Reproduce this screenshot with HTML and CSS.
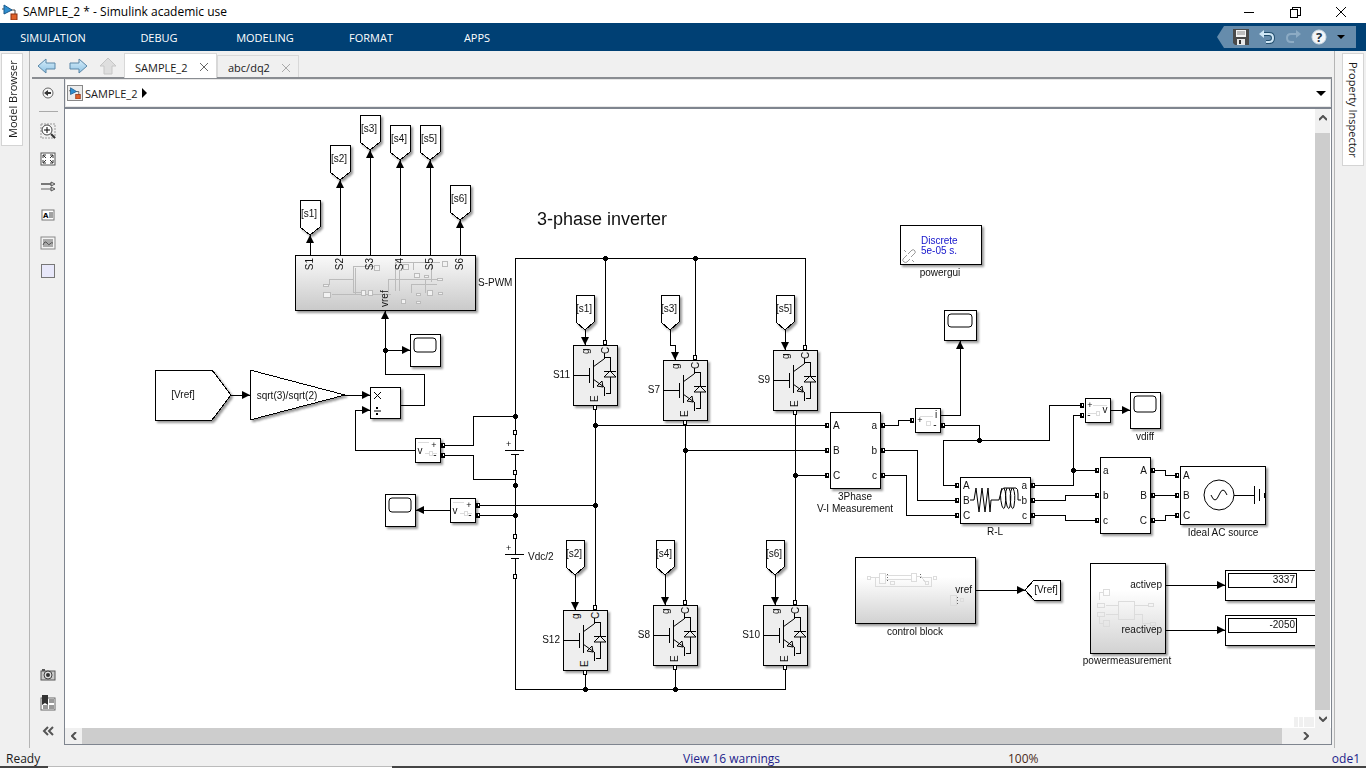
FILE: index.html
```html
<!DOCTYPE html>
<html lang="en">
<head>
  <meta charset="UTF-8">
  <title>SAMPLE_2 * - Simulink academic use</title>
  <link rel="stylesheet" href="styles.css">
</head>
<body>
  <header class="titlebar">
    <svg class="app-icon" width="16" height="16" viewBox="0 0 16 16">
      <path d="M0 5h3M9 6h4v4" fill="none" stroke="#444"/>
      <path d="M2 1l8 5-8 4z" fill="#2f8fd0" stroke="#1b5a8c"/>
      <rect x="9" y="10" width="6" height="6" fill="#e0622a" stroke="#8a2f10"/>
    </svg>
    <h1>SAMPLE_2 * - Simulink academic use</h1>
    <div class="window-buttons">
      <button type="button" aria-label="Minimize"><svg width="12" height="12"><path d="M1 6h10"/></svg></button>
      <button type="button" aria-label="Restore"><svg width="12" height="12"><path d="M1 3h7v8h-7zM3 3V1h8v8H8"/></svg></button>
      <button type="button" aria-label="Close"><svg width="12" height="12"><path class="smooth" d="M1 1l10 10M11 1L1 11"/></svg></button>
    </div>
  </header>

  <nav class="toolstrip">
    <button type="button">SIMULATION</button>
    <button type="button">DEBUG</button>
    <button type="button">MODELING</button>
    <button type="button">FORMAT</button>
    <button type="button">APPS</button>
    <div class="quick-access">
      <button type="button" aria-label="Save">
        <svg width="16" height="16" viewBox="0 0 16 16">
          <path d="M0 0h16v16H2L0 14z" fill="#4a4a4a"/>
          <rect x="3" y="1" width="10" height="7" fill="#f4f4f4"/>
          <path d="M4 3h8M4 5h8" stroke="#888"/>
          <rect x="4" y="10" width="8" height="6" fill="#e8e8e8"/>
          <rect x="6" y="11" width="2" height="4" fill="#333"/>
        </svg>
      </button>
      <button type="button" aria-label="Undo">
        <svg width="16" height="14" viewBox="0 0 16 14">
          <path d="M4 4h6q4 0 4 4t-4 4H7" fill="none" stroke="#24506f" stroke-width="4"/>
          <path d="M4 4h6q4 0 4 4t-4 4H7" fill="none" stroke="#cfe6f5" stroke-width="2"/>
          <path d="M0 4l5-4v8z" fill="#cfe6f5"/>
        </svg>
      </button>
      <button type="button" aria-label="Redo" disabled>
        <svg width="16" height="14" viewBox="0 0 16 14">
          <path d="M12 4H6Q2 4 2 8t4 4h3" fill="none" stroke="#8cabc4" stroke-width="2"/>
          <path d="M16 4l-5-4v8z" fill="#8cabc4"/>
        </svg>
      </button>
      <button type="button" aria-label="Help">
        <svg width="16" height="16" viewBox="0 0 16 16">
          <circle cx="8" cy="8" r="7" fill="#f2f5f8" stroke="#cdd9e3"/>
          <text x="8" y="13" text-anchor="middle" class="help-mark">?</text>
        </svg>
      </button>
      <button type="button" class="more" aria-label="More"><svg width="8" height="4"><path d="M0 0h8L4 4z"/></svg></button>
    </div>
  </nav>

  <main class="workspace">
    <aside class="dock dock-left">
      <button type="button" class="dock-tab">Model Browser</button>
    </aside>

    <section class="editor">
      <div class="tab-row">
        <div class="history">
          <button type="button" aria-label="Back">
            <svg width="20" height="16" viewBox="0 0 20 16"><path d="M1 8l8-7v4h9v6H9v4z" fill="url(#blue)" stroke="#5a87a8"/></svg>
          </button>
          <button type="button" aria-label="Forward">
            <svg width="20" height="16" viewBox="0 0 20 16"><path d="M19 8l-8-7v4H2v6h9v4z" fill="url(#blue)" stroke="#5a87a8"/></svg>
          </button>
          <button type="button" aria-label="Up to parent" disabled>
            <svg width="18" height="18" viewBox="0 0 18 18"><path d="M9 1l8 8h-4v8H5V9H1z" fill="#dedede" stroke="#c6c6c6"/></svg>
          </button>
        </div>
        <div class="tab active">
          <span>SAMPLE_2</span>
          <button type="button" aria-label="Close SAMPLE_2"><svg width="8" height="8"><path d="M0 0l8 8M8 0L0 8"/></svg></button>
        </div>
        <div class="tab">
          <span>abc/dq2</span>
          <button type="button" aria-label="Close abc/dq2"><svg width="8" height="8"><path d="M0 0l8 8M8 0L0 8"/></svg></button>
        </div>
      </div>

      <div class="editor-body">
        <div class="palette">
          <button type="button" aria-label="Hide browser">
            <svg width="12" height="12" viewBox="0 0 12 12"><circle cx="6" cy="6" r="5" fill="#f8f8f8" stroke="#666"/><path d="M2 6l4-3v2h3v2H6v2z" fill="#333"/></svg>
          </button>
          <hr>
          <button type="button" aria-label="Zoom">
            <svg width="16" height="16" viewBox="0 0 16 16">
              <rect x="1" y="1" width="14" height="14" fill="none" stroke="#999" stroke-dasharray="2 1"/>
              <circle cx="7" cy="7" r="5" fill="#fff" stroke="#444"/>
              <path d="M4 7h6M7 4v6" stroke="#000"/>
              <path d="M11 11l4 4" stroke="#333" stroke-width="2"/>
            </svg>
          </button>
          <button type="button" aria-label="Fit to view">
            <svg width="16" height="14" viewBox="0 0 16 14">
              <rect x="1" y="1" width="14" height="12" fill="#fff" stroke="#555"/>
              <path d="M3 6V3h3M10 3h3v3M13 8v3h-3M6 11H3V8M3 3l3 3M13 3l-3 3M13 11l-3-3M3 11l3-3" fill="none" stroke="#333"/>
            </svg>
          </button>
          <button type="button" aria-label="Sample time">
            <svg width="16" height="12" viewBox="0 0 16 12">
              <path d="M1 3h11" stroke="#000"/><path d="M1 8h11" stroke="#666"/>
              <path d="M11 1l4 2-4 2zM11 6l4 2-4 2z" fill="#ddd" stroke="#555"/>
            </svg>
          </button>
          <button type="button" aria-label="Annotation">
            <svg width="14" height="12" viewBox="0 0 14 12">
              <rect x="1" y="1" width="12" height="10" fill="#fff" stroke="#777"/>
              <text x="2" y="9" class="note-mark">A</text>
              <path d="M8 4h4M8 6h4M8 8h4" stroke="#444"/>
            </svg>
          </button>
          <button type="button" aria-label="Image">
            <svg width="16" height="14" viewBox="0 0 16 14">
              <rect x="1" y="1" width="14" height="12" fill="#f4f4f4" stroke="#888"/>
              <rect x="3" y="3" width="10" height="8" fill="#aaa"/>
              <path d="M3 9q2-5 4-2t3 1 3-1" fill="none" stroke="#555"/>
            </svg>
          </button>
          <button type="button" aria-label="Area">
            <svg width="14" height="14" viewBox="0 0 14 14"><path d="M0 0h14v14H0z" fill="#777"/><path d="M1 1h12v12H1z" fill="#e8e8fa"/></svg>
          </button>
          <div class="spacer"></div>
          <button type="button" aria-label="Screenshot">
            <svg width="16" height="12" viewBox="0 0 16 12">
              <path d="M2 0h3v2H2z" fill="#555"/>
              <rect x="1" y="2" width="14" height="9" fill="#c9c9c9" stroke="#555"/>
              <circle cx="8" cy="6" r="4" fill="#ddd" stroke="#444"/><circle cx="8" cy="6" r="2" fill="#333"/>
            </svg>
          </button>
          <button type="button" aria-label="Viewmarks">
            <svg width="16" height="16" viewBox="0 0 16 16">
              <rect x="1" y="3" width="14" height="12" fill="#fff" stroke="#666"/>
              <path d="M9 4h5v4H9zM9 10h5v4H9zM3 10h5v4H3z" fill="#999"/>
              <path d="M2 0h6v10L5 8l-3 2z" fill="#333"/>
            </svg>
          </button>
          <button type="button" aria-label="Collapse palette">
            <svg width="12" height="10" viewBox="0 0 12 10"><path d="M6 1L2 5l4 4M11 1L7 5l4 4" fill="none" stroke="#555" stroke-width="2"/></svg>
          </button>
        </div>

        <div class="panel">
          <div class="breadcrumb">
            <span class="crumb-icon">
              <svg width="12" height="12" viewBox="0 0 16 16">
                <path d="M0 5h3M9 6h4v4" fill="none" stroke="#444"/>
                <path d="M2 1l8 5-8 4z" fill="#2f8fd0" stroke="#1b5a8c"/>
                <rect x="9" y="10" width="6" height="6" fill="#e0622a" stroke="#8a2f10"/>
              </svg>
            </span>
            <a href="#">SAMPLE_2</a>
            <svg width="5" height="10"><path d="M0 0l5 5-5 5z"/></svg>
            <button type="button" aria-label="Show path history"><svg width="10" height="5"><path d="M0 0h10L5 5z"/></svg></button>
          </div>

          <div class="canvas">
            <svg class="diagram" width="100%" height="100%">
              <defs>
                <linearGradient id="blue" x1="0" y1="0" x2="0" y2="1">
                  <stop offset="0" stop-color="#d8eefa"/><stop offset="1" stop-color="#8fc3e4"/>
                </linearGradient>
                <linearGradient id="shade" x1="0" y1="0" x2="0" y2="1">
                  <stop offset="0.3" stop-color="#fff"/><stop offset="1" stop-color="#d2d2d2"/>
                </linearGradient>
                <linearGradient id="shade-dark" x1="0" y1="0" x2="0" y2="1">
                  <stop offset="0" stop-color="#fafafa"/><stop offset="1" stop-color="#cacaca"/>
                </linearGradient>
                <marker id="arrow" viewBox="0 0 8 8" refX="8" refY="4" markerWidth="8" markerHeight="8" markerUnits="userSpaceOnUse" orient="auto">
                  <path d="M0 0l8 4-8 4z"/>
                </marker>
                <g id="port-h"><path class="solid" d="M-2-2h4v5h-4z"/><path class="hole" d="M0-1h1v2h-1z"/></g>
                <g id="port-v"><path class="solid" d="M-2-2h4v5h-4z"/><path class="hole" d="M-1-1h2v3h-2z"/></g>
                <g id="dot"><path class="solid" d="M-1-2h3v1h1v3h-1v1h-3v-1h-1v-3h1z"/></g>
                <path id="tag" d="M0 0h20v27l-10 8-10-8z"/>
                <path id="tag-small" d="M0 0h18v27l-9 8-9-8z"/>
                <g id="scope">
                  <rect width="30" height="32"/>
                  <rect class="screen" x="4" y="4" width="22" height="14" rx="3"/>
                </g>
                <g id="igbt">
                  <rect class="block grey" width="44" height="60"/>
                  <g class="wire">
                    <path d="M0 30h16M16 23v15M20 15v28M31 12h6v14M31 26h12M37 32v16h-4M31 8v6M31 42v9"/>
                    <path class="smooth" d="M20 22l11-8M20 34l11 8M31 32l6-6 6 6zM24 41l5-5 1 6z"/>
                  </g>
                  <text transform="translate(16 9) rotate(-90)">g</text>
                  <text transform="translate(36 9) rotate(-90)">C</text>
                  <text transform="translate(25 57) rotate(-90)">E</text>
                  <use href="#port-v" x="32" y="-3"/>
                  <use href="#port-v" x="22" y="62"/>
                </g>
                <g id="cell">
                  <path class="wire" d="M-10 0h19M-4 4h8"/>
                  <text x="-9" y="-3" class="tiny">+</text>
                  <use href="#port-v" x="0" y="-18"/>
                  <use href="#port-v" x="0" y="22"/>
                </g>
              </defs>

              <!-- model coordinates start at 65,109 in the upper left corner -->
              <g transform="translate(-65 -109)">
                <!-- DC bus and inverter legs -->
                <g class="wire">
                  <path d="M515 450V258H805V347M605 258V341M695 258V357"/>
                  <path d="M515 454V554M515 558V689H785V669M585 674V689M675 669V689"/>
                  <path d="M595 409V607M595 425H827M685 424V602M685 450H827M795 414V602M795 475H827"/>
                  <path d="M445 445H473V416H515M445 455H473V479H515M480 505H595M480 515H515"/>
                </g>

                <!-- load side -->
                <g class="wire">
                  <path d="M885 425H898V420H911M945 425H979V440M957 485H943V440H1049V405H1083"/>
                  <path d="M885 450H917V500H957M885 475H906V515H957"/>
                  <path d="M1035 485H1073V415H1083M1073 470H1097M1035 500H1065V495H1097M1035 515H1065V520H1097"/>
                  <path d="M1154 470H1165V475H1177M1154 495H1177M1154 520H1165V515H1177"/>
                </g>

                <!-- signals -->
                <g class="wire" marker-end="url(#arrow)">
                  <path d="M310 255V235"/><path d="M340 255V180"/><path d="M370 255V150"/>
                  <path d="M400 255V160"/><path d="M430 255V160"/><path d="M460 255V220"/>
                  <path d="M401 405H424V374H385V311"/><path d="M385 350H410"/>
                  <path d="M231 395H250"/><path d="M345 395H370"/><path d="M415 450H355V410H370"/>
                  <path d="M450 510H416"/>
                  <path d="M585 330V345"/><path d="M670 330V345H675V360"/><path d="M785 330V350"/>
                  <path d="M575 575V610"/><path d="M665 575V605"/><path d="M775 575V605"/>
                  <path d="M941 415H960V341"/><path d="M1111 410H1130"/>
                  <path d="M976 590H1025"/><path d="M1166 585H1225"/><path d="M1166 630H1225"/>
                </g>

                <!-- goto tags -->
                <g class="block">
                  <use href="#tag" x="300" y="200"/><use href="#tag" x="330" y="145"/>
                  <use href="#tag" x="360" y="115"/><use href="#tag" x="390" y="125"/>
                  <use href="#tag" x="420" y="125"/><use href="#tag" x="450" y="185"/>
                  <use href="#tag-small" x="576" y="295"/><use href="#tag-small" x="661" y="295"/>
                  <use href="#tag-small" x="776" y="295"/><use href="#tag-small" x="566" y="540"/>
                  <use href="#tag-small" x="656" y="540"/><use href="#tag-small" x="766" y="540"/>
                  <path d="M155 370h57l19 25-19 25h-57z"/>
                  <path d="M250 370l95 25-95 25z"/>
                  <path d="M1025 590l9-10h26v20h-26z"/>
                </g>
                <g class="mid">
                  <text x="309" y="217">[s1]</text><text x="339" y="162">[s2]</text>
                  <text x="369" y="132">[s3]</text><text x="399" y="142">[s4]</text>
                  <text x="429" y="142">[s5]</text><text x="459" y="202">[s6]</text>
                  <text x="584" y="312">[s1]</text><text x="669" y="312">[s3]</text>
                  <text x="784" y="312">[s5]</text><text x="574" y="557">[s2]</text>
                  <text x="664" y="557">[s4]</text><text x="774" y="557">[s6]</text>
                  <text x="183" y="398">[Vref]</text><text x="287" y="399">sqrt(3)/sqrt(2)</text>
                  <text x="1046" y="593">[Vref]</text>
                </g>

                <!-- S-PWM subsystem -->
                <rect class="block dark" x="295" y="255" width="180" height="55"/>
                <g class="preview">
                  <path d="M329 285V279H353V266H374M353 279V292H361M332 294H391M355 294V268M388 293V279H440M395 291V262H440M399 291V270H402M425 293V279M431 262V282M411 293V284H437M413 270V262"/>
                  <path d="M323 284h5v2h-5zM323 292h7v5h-7zM374 265h5v5h-5zM361 290h4v5h-4zM368 290h4v5h-4zM403 264h5v5h-5zM414 273h5v4h-5zM442 261h5v5h-5zM427 290h5v5h-5zM401 299h4v4h-4zM416 293h4v2h-4zM438 292h4v2h-4zM416 301h4v2h-4zM437 278h5v2h-5zM424 275h4v2h-4z"/>
                </g>
                <g class="end">
                  <text transform="translate(313 258) rotate(-90)">S1</text>
                  <text transform="translate(343 258) rotate(-90)">S2</text>
                  <text transform="translate(373 258) rotate(-90)">S3</text>
                  <text transform="translate(403 258) rotate(-90)">S4</text>
                  <text transform="translate(433 258) rotate(-90)">S5</text>
                  <text transform="translate(463 258) rotate(-90)">S6</text>
                </g>
                <text transform="translate(388 307) rotate(-90)">vref</text>
                <text x="478" y="286">S-PWM</text>

                <!-- product -->
                <rect class="block" x="370" y="387" width="30" height="31"/>
                <path class="symbol" d="M374 392l7 7M381 392l-7 7M374 411h7"/>
                <path class="solid" d="M376 407h2v2h-2zM376 413h2v2h-2z"/>

                <!-- scopes -->
                <g class="block">
                  <use href="#scope" x="410" y="334"/>
                  <use href="#scope" x="385" y="494"/>
                  <rect x="944" y="310" width="32" height="30"/>
                  <rect class="screen" x="948" y="314" width="24" height="13" rx="3"/>
                  <rect x="1130" y="392" width="30" height="36"/>
                  <rect class="screen" x="1134" y="396" width="22" height="16" rx="3"/>
                </g>

                <!-- voltage and current measurement -->
                <g class="block">
                  <rect x="415" y="438" width="25" height="24"/>
                  <rect x="450" y="498" width="25" height="24"/>
                  <rect x="915" y="408" width="25" height="24"/>
                  <rect x="1085" y="398" width="25" height="24"/>
                </g>
                <g class="preview faint">
                  <path d="M418 442H429M425 453h4M433 453h4M453 502H464M460 513h4M468 513h4M920 416H933M1093 405H1107M1088 413H1096"/>
                  <path d="M429 451h3v4h-3zM464 511h3v4h-3zM926 421h4v4h-4zM1096 411h3v4h-3z"/>
                </g>
                <g class="mid">
                  <text x="420" y="454">v</text><text x="434" y="448" class="tiny">+</text><text x="435" y="458">-</text>
                  <text x="455" y="514">v</text><text x="469" y="508" class="tiny">+</text><text x="470" y="518">-</text>
                  <text x="920" y="423" class="tiny">+</text><text x="936" y="418">i</text><text x="935" y="428">-</text>
                  <text x="1090" y="408" class="tiny">+</text><text x="1089" y="418">-</text><text x="1105" y="413">v</text>
                </g>

                <!-- switches -->
                <use href="#igbt" x="573" y="345"/><use href="#igbt" x="663" y="360"/>
                <use href="#igbt" x="773" y="350"/><use href="#igbt" x="563" y="610"/>
                <use href="#igbt" x="653" y="605"/><use href="#igbt" x="763" y="605"/>
                <g class="end">
                  <text x="570" y="378">S11</text><text x="660" y="393">S7</text><text x="770" y="383">S9</text>
                  <text x="560" y="643">S12</text><text x="650" y="638">S8</text><text x="760" y="638">S10</text>
                </g>

                <!-- DC sources -->
                <use href="#cell" x="515" y="450"/><use href="#cell" x="515" y="554"/>
                <text x="528" y="560">Vdc/2</text>

                <!-- three phase blocks -->
                <g class="block">
                  <rect x="830" y="412" width="50" height="76"/>
                  <rect x="960" y="477" width="70" height="46"/>
                  <rect x="1100" y="457" width="50" height="76"/>
                  <rect x="1180" y="466" width="85" height="58"/>
                </g>
                <text x="833" y="429">A</text><text x="833" y="454">B</text><text x="833" y="479">C</text>
                <text x="963" y="489">A</text><text x="963" y="504">B</text><text x="963" y="519">C</text>
                <text x="1103" y="474">a</text><text x="1103" y="499">b</text><text x="1103" y="524">c</text>
                <text x="1183" y="479">A</text><text x="1183" y="499">B</text><text x="1183" y="519">C</text>
                <g class="end">
                  <text x="877" y="429">a</text><text x="877" y="454">b</text><text x="877" y="479">c</text>
                  <text x="1027" y="489">a</text><text x="1027" y="504">b</text><text x="1027" y="519">c</text>
                  <text x="1147" y="474">A</text><text x="1147" y="499">B</text><text x="1147" y="524">C</text>
                </g>
                <path class="symbol" d="M970 500h4l2-12 3 24 3-24 3 24 3-24 2 24 1-12h8l2-8q1-4 3-4h12q2 0 2 6v6h3M1002 488q-3 6 0 18 2 5 3 0 2-12-1-18M1007 488q-3 6 0 18 2 5 3 0 2-12-1-18M1012 488q-3 6-1 18 2 5 3 0 2-12-1-18"/>
                <circle class="symbol" cx="1219" cy="495" r="15"/>
                <path class="symbol" d="M1211 495q4 10 8 0t8 0"/>
                <path class="wire" d="M1234 495H1254M1254 486V504M1259 489V501M1264 493V498"/>

                <!-- physical ports -->
                <use href="#port-h" x="443" y="445"/><use href="#port-h" x="443" y="455"/>
                <use href="#port-h" x="478" y="505"/><use href="#port-h" x="478" y="515"/>
                <use href="#port-h" x="827" y="425"/><use href="#port-h" x="827" y="450"/><use href="#port-h" x="827" y="475"/>
                <use href="#port-h" x="883" y="425"/><use href="#port-h" x="883" y="450"/><use href="#port-h" x="883" y="475"/>
                <use href="#port-h" x="912" y="420"/><use href="#port-h" x="943" y="425"/>
                <use href="#port-h" x="957" y="485"/><use href="#port-h" x="957" y="500"/><use href="#port-h" x="957" y="515"/>
                <use href="#port-h" x="1033" y="485"/><use href="#port-h" x="1033" y="500"/><use href="#port-h" x="1033" y="515"/>
                <use href="#port-h" x="1082" y="405"/><use href="#port-h" x="1082" y="415"/>
                <use href="#port-h" x="1097" y="470"/><use href="#port-h" x="1097" y="495"/><use href="#port-h" x="1097" y="520"/>
                <use href="#port-h" x="1153" y="470"/><use href="#port-h" x="1153" y="495"/><use href="#port-h" x="1153" y="520"/>
                <use href="#port-h" x="1177" y="475"/><use href="#port-h" x="1177" y="495"/><use href="#port-h" x="1177" y="515"/>

                <!-- junctions -->
                <use href="#dot" x="605" y="258"/><use href="#dot" x="695" y="258"/>
                <use href="#dot" x="385" y="350"/><use href="#dot" x="515" y="416"/>
                <use href="#dot" x="515" y="485"/><use href="#dot" x="515" y="515"/>
                <use href="#dot" x="595" y="425"/><use href="#dot" x="595" y="505"/>
                <use href="#dot" x="685" y="450"/><use href="#dot" x="795" y="475"/>
                <use href="#dot" x="585" y="689"/><use href="#dot" x="675" y="689"/>
                <use href="#dot" x="979" y="440"/><use href="#dot" x="1073" y="470"/>

                <!-- powergui -->
                <rect class="block" x="900" y="225" width="81" height="39"/>
                <text x="921" y="244" class="blue">Discrete</text>
                <text x="921" y="254" class="blue">5e-05 s.</text>
                <path class="link-icon" d="M908 254l4-4q2-1 3 1t-1 3l-3 3M907 255l-4 4q-1 2 1 3t3 0l3-3M904 250l2 2M912 260l2 2"/>

                <!-- control block and power measurement -->
                <rect class="block shaded" x="855" y="557" width="120" height="66"/>
                <rect class="block shaded" x="1090" y="563" width="75" height="90"/>
                <g class="preview faint">
                  <path d="M870 577h9M875 577v9h56v-8M885 575h26M885 579h26M916 576h5l4 6M922 577h10"/>
                  <path d="M867 576h3v3h-3zM879 573h6v10h-6zM911 573h5v8h-5zM890 581h4v3h-4zM933 576h3v3h-3zM950 595h6v10h-6zM960 598h3v3h-3zM925 581h3v3h-3z"/>
                  <path d="M1099 600V592H1103M1106 605H1118M1106 614H1118M1099 617V623H1103M1134 605H1148M1134 614H1142V623H1150"/>
                  <path d="M1103 589h6v6h-6zM1097 603h7v4h-7zM1097 612h7v4h-7zM1103 620h6v6h-6zM1118 601h16v18h-16zM1148 603h5v3h-5zM1150 622h5v3h-5z"/>
                  <path class="specks" d="M887 574v9M920 574v5M957 597v7"/>
                </g>
                <g class="end">
                  <text x="972" y="593">vref</text>
                  <text x="1162" y="588">activep</text>
                  <text x="1162" y="633">reactivep</text>
                </g>

                <!-- displays, cut off by the view -->
                <rect class="block" x="1225" y="570" width="120" height="30"/>
                <rect class="block" x="1225" y="615" width="120" height="30"/>
                <path class="wire" d="M1228 573h68v14h-68zM1228 618h68v14h-68z"/>
                <g class="end">
                  <text x="1295" y="583">3337</text>
                  <text x="1295" y="628">-2050</text>
                </g>

                <!-- captions -->
                <g class="mid">
                  <text x="602" y="225" class="heading">3-phase inverter</text>
                  <text x="940" y="276">powergui</text>
                  <text x="855" y="500">3Phase</text>
                  <text x="855" y="512">V-I Measurement</text>
                  <text x="995" y="535">R-L</text>
                  <text x="1145" y="440">vdiff</text>
                  <text x="1223" y="536">Ideal AC source</text>
                  <text x="915" y="635">control block</text>
                  <text x="1127" y="664">powermeasurement</text>
                </g>
              </g>
            </svg>
            <div class="resize-hint"><i></i><i></i><i></i></div>
            <div class="scroll-y">
              <button type="button" aria-label="Scroll up"><svg width="8" height="6"><path d="M0 5l4-4 4 4"/></svg></button>
              <div class="thumb"></div>
              <button type="button" aria-label="Scroll down"><svg width="8" height="6"><path d="M0 1l4 4 4-4"/></svg></button>
            </div>
            <div class="scroll-x">
              <button type="button" aria-label="Scroll left"><svg width="6" height="8"><path d="M5 0L1 4l4 4"/></svg></button>
              <div class="thumb"></div>
              <button type="button" aria-label="Scroll right"><svg width="6" height="8"><path d="M1 0l4 4-4 4"/></svg></button>
            </div>
          </div>
        </div>
      </div>
    </section>

    <aside class="dock dock-right">
      <button type="button" class="dock-tab">Property Inspector</button>
    </aside>
  </main>

  <footer class="status">
    <span>Ready</span>
    <a href="#">View 16 warnings</a>
    <span class="zoom">100%</span>
    <a href="#" class="solver">ode1</a>
  </footer>
  <div class="screen-edge"><i></i></div>
</body>
</html>
```
FILE: styles.css
```css
* {
  box-sizing: border-box;
}
body {
  margin: 0;
  height: 100vh;
  display: flex;
  flex-direction: column;
  overflow: hidden;
  background: #f0f0f0;
  color: #1a1a1a;
  font-family: "Open Sans", "Noto Sans", sans-serif;
  font-size: 11px;
}
button {
  display: flex;
  align-items: center;
  justify-content: center;
  margin: 0;
  padding: 0;
  border: 0;
  background: none;
  color: inherit;
  font: inherit;
}
a {
  color: inherit;
  text-decoration: none;
}
svg {
  display: block;
}

/* Title bar */
.titlebar {
  flex: none;
  height: 23px;
  display: flex;
  align-items: center;
  padding-left: 2px;
  background: #fff;
}
.titlebar h1 {
  margin: 0 0 0 5px;
  font-size: 12px;
  font-weight: 400;
  color: #000;
}
.window-buttons {
  display: flex;
  margin-left: auto;
  padding-right: 2px;
}
.window-buttons button {
  width: 46px;
  height: 20px;
}
.window-buttons path {
  fill: none;
  stroke: #000;
  shape-rendering: crispEdges;
}

/* Toolstrip */
.toolstrip {
  flex: none;
  height: 28px;
  display: flex;
  align-items: center;
  background: #004074;
  color: #fff;
}
.toolstrip > button {
  width: 106px;
  height: 28px;
}
.quick-access {
  display: flex;
  align-items: center;
  gap: 10px;
  height: 22px;
  margin-left: auto;
  margin-right: 10px;
  padding: 0 11px 0 16px;
  background: #668cac;
  clip-path: polygon(7px 0, 100% 0, 100% 100%, 7px 100%, 0 50%);
}
.help-mark {
  font-size: 13px;
  font-weight: 700;
  fill: #234;
}

/* Side docks */
.workspace {
  flex: 1;
  min-height: 0;
  display: flex;
}
.dock {
  flex: none;
  padding-top: 2px;
}
.dock-left {
  width: 30px;
  padding-left: 1px;
  border-right: 1px solid #b5b5b5;
}
.dock-right {
  width: 32px;
  padding-left: 7px;
  border-left: 1px solid #b5b5b5;
}
.dock-tab {
  width: 22px;
  height: 93px;
  border: 1px solid #d4d4d4;
  background: #fff;
  writing-mode: vertical-rl;
}
.dock-left .dock-tab {
  transform: rotate(180deg);
}
.dock-right .dock-tab {
  height: 113px;
}

/* Editor tabs */
.editor {
  flex: 1;
  min-width: 0;
  display: flex;
  flex-direction: column;
  margin: 0 2px 3px;
}
.tab-row {
  flex: none;
  display: flex;
  align-items: flex-end;
  height: 28px;
  border-bottom: 2px solid #8a8d92;
}
.history {
  display: flex;
  align-items: center;
  gap: 11px;
  height: 26px;
  padding: 4px 7px 0 5px;
}
.tab {
  display: flex;
  align-items: center;
  justify-content: space-between;
  width: 82px;
  height: 22px;
  padding: 2px 7px 0 10px;
  border: 1px solid #d8d8d8;
  border-bottom: 0;
}
.tab button {
  width: 10px;
  height: 10px;
}
.tab path {
  fill: none;
  stroke: #aaa;
}
.tab.active {
  width: 93px;
  height: 25px;
  margin-bottom: -1px;
  background: #fff;
}
.tab.active path {
  stroke: #666;
}

/* Palette */
.editor-body {
  flex: 1;
  min-height: 0;
  display: flex;
}
.palette {
  flex: none;
  width: 32px;
  display: flex;
  flex-direction: column;
}
.palette button {
  width: 32px;
  height: 28px;
}
.palette hr {
  width: 19px;
  margin: 4px auto 5px;
  border: 0;
  border-top: 1px solid #aaa;
}
.spacer {
  flex: 1;
}
.note-mark {
  font: 700 7px "DejaVu Sans", sans-serif;
}

/* Breadcrumb */
.panel {
  flex: 1;
  min-width: 0;
  display: flex;
  flex-direction: column;
  border: 1px solid #7f858f;
  border-top: 0;
}
.breadcrumb {
  flex: none;
  display: flex;
  align-items: center;
  height: 30px;
  padding: 0 5px 0 2px;
  border-bottom: 2px solid #7f858f;
  background: #fff;
  box-shadow: inset 0 0 0 1px #e8e8e8;
}
.crumb-icon {
  display: flex;
  align-items: center;
  justify-content: center;
  width: 16px;
  height: 16px;
  margin-right: 2px;
  border: 1px solid #888;
  background: #ececec;
}
.breadcrumb a {
  margin-right: 5px;
}
.breadcrumb button {
  margin-left: auto;
}

/* Canvas and scrollbars */
.canvas {
  flex: 1;
  min-height: 0;
  position: relative;
  display: grid;
  grid-template-columns: 1fr 16px;
  grid-template-rows: 1fr 16px;
  background: #fff;
}
.diagram {
  min-width: 0;
  min-height: 0;
  overflow: hidden;
}
.resize-hint {
  position: absolute;
  right: 17px;
  bottom: 17px;
  display: flex;
  gap: 1px;
}
.resize-hint i {
  width: 4px;
  height: 10px;
  background: #f0f0f0;
}
.resize-hint i:last-child {
  width: 10px;
}
.scroll-y,
.scroll-x {
  display: flex;
  background: #f0f0f0;
}
.scroll-y {
  flex-direction: column;
  border-right: 1px solid #fff;
}
.scroll-x {
  grid-column: 1 / 3;
  padding-right: 17px;
}
.scroll-y button {
  height: 18px;
}
.scroll-y .thumb {
  flex: 1;
  margin-top: 6px;
}
.scroll-x button {
  width: 17px;
}
.scroll-x .thumb {
  flex: 1;
  margin-right: 15px;
}
.thumb {
  background: #cdcdcd;
}
.scroll-y path,
.scroll-x path {
  fill: none;
  stroke: #505050;
  stroke-width: 2;
}

/* Block diagram */
.diagram text {
  font-family: "Liberation Sans", Arial, sans-serif;
  font-size: 10px;
  fill: #111;
}
.diagram .heading {
  font-size: 18px;
}
.diagram .tiny {
  font-size: 9px;
}
.diagram .blue {
  fill: #1414cc;
}
.mid text {
  text-anchor: middle;
}
.end text {
  text-anchor: end;
}
.wire,
.symbol {
  fill: none;
  stroke: #000;
}
.wire {
  shape-rendering: crispEdges;
}
.block {
  fill: #fff;
  stroke: #000;
  shape-rendering: crispEdges;
  filter: drop-shadow(2px 2px 1px rgba(0, 0, 0, 0.4));
}
.screen,
.smooth,
marker path {
  shape-rendering: auto;
}
marker path {
  stroke: none;
  fill: #000;
}
.grey {
  fill: #eee;
}
.shaded {
  fill: url(#shade);
}
.dark {
  fill: url(#shade-dark);
}
.solid {
  fill: #000;
  shape-rendering: crispEdges;
}
.hole {
  fill: #fff;
  shape-rendering: crispEdges;
}
.preview {
  fill: #f2f2f2;
  stroke: #bbb;
  shape-rendering: crispEdges;
}
.preview path:first-child {
  fill: none;
}
.faint {
  fill: none;
  stroke: #dcdcdc;
}
.specks {
  stroke: #666;
  stroke-dasharray: 1 2;
}
.link-icon {
  fill: none;
  stroke: #999;
}

/* Status bar */
.status {
  flex: none;
  display: grid;
  grid-template-columns: 50% 24% 1fr auto;
  align-items: center;
  height: 18px;
  padding: 2px 6px 0;
  font-size: 12px;
}
.status a {
  color: #1c1c8a;
}
.status .zoom {
  color: #4a2a1a;
}
.screen-edge {
  flex: none;
  height: 2px;
  padding-left: 48px;
  background: #444;
}
.screen-edge i {
  display: block;
  width: 344px;
  height: 2px;
  border-top: 1px solid #bbb;
  background: #fff;
}
```
